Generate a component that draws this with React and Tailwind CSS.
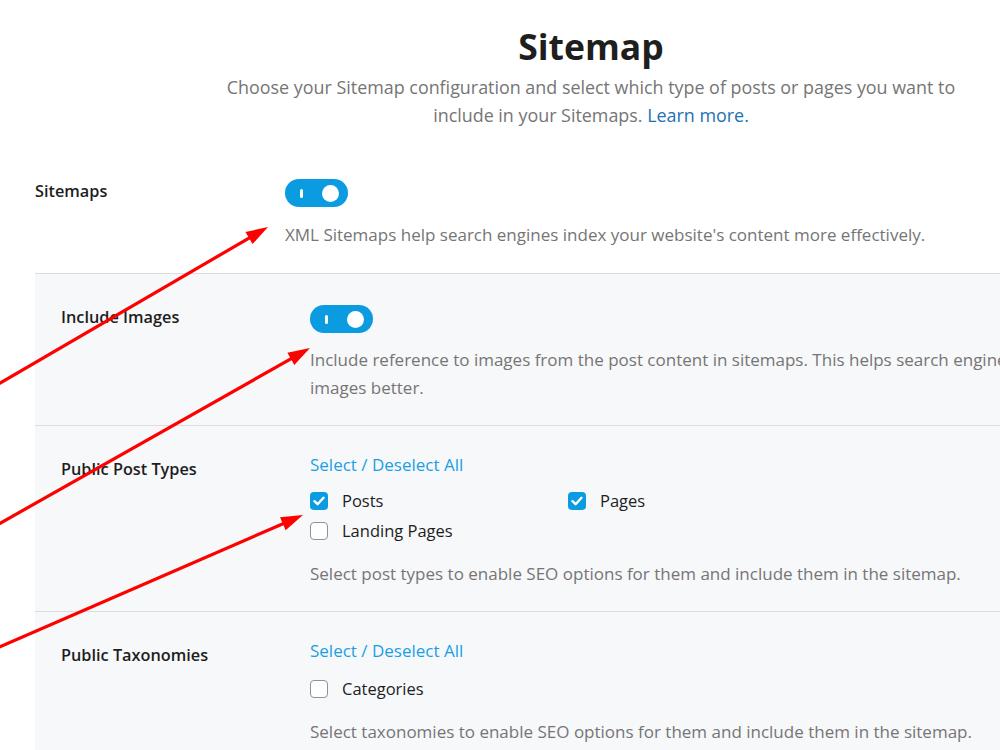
import React from "react";

const FONT = { fontFamily: "'Open Sans', 'Noto Sans', sans-serif" };

function Toggle() {
  return (
    <div className="relative flex h-[28px] w-[63px] items-center rounded-full bg-[#0b9be0]">
      <span className="ml-[15px] h-[9px] w-[3px] rounded-full bg-white" />
      <span className="ml-auto mr-[9px] h-[17px] w-[17px] rounded-full bg-white" />
    </div>
  );
}

function Checkbox({ checked }) {
  if (checked) {
    return (
      <span className="flex h-[18px] w-[18px] items-center justify-center rounded-[4px] bg-[#0b9be0]">
        <svg width="12" height="10" viewBox="0 0 12 10" fill="none">
          <path d="M1.5 5.2 L4.6 8.2 L10.5 1.8" stroke="white" strokeWidth="2.4" strokeLinecap="round" strokeLinejoin="round" />
        </svg>
      </span>
    );
  }
  return <span className="h-[18px] w-[18px] rounded-[4px] border-[1.5px] border-[#8f9296] bg-white" />;
}

function CheckItem({ checked, label }) {
  return (
    <label className="flex h-[30px] items-center gap-[14px] text-[16.5px] text-[#1e1e1e]">
      <Checkbox checked={checked} />
      <span>{label}</span>
    </label>
  );
}

function Arrow({ x1, y1, x2, y2 }) {
  const dx = x2 - x1;
  const dy = y2 - y1;
  const len = Math.hypot(dx, dy);
  const ux = dx / len;
  const uy = dy / len;
  const hl = 22;
  const hw = 7;
  const bx = x2 - ux * hl;
  const by = y2 - uy * hl;
  const nx = -uy;
  const ny = ux;
  const ex = x2 - ux * (hl - 4);
  const ey = y2 - uy * (hl - 4);
  return (
    <g>
      <line x1={x1} y1={y1} x2={ex} y2={ey} stroke="#ff0000" strokeWidth="3.2" />
      <polygon
        points={`${x2},${y2} ${bx + nx * hw},${by + ny * hw} ${bx - nx * hw},${by - ny * hw}`}
        fill="#ff0000"
      />
    </g>
  );
}

export default function App() {
  return (
    <div className="relative h-[750px] w-[1000px] overflow-hidden bg-white" style={FONT}>
      <div className="ml-[35px] w-[1112px]">
        <div className="flex flex-col items-center pt-[24px]">
          <h1 className="text-[35.5px] font-bold leading-[44px] text-[#1e1e1e]">Sitemap</h1>
          <p className="mt-[5px] w-[760px] text-center text-[17.9px] leading-[28px] text-[#757575]">
            Choose your Sitemap configuration and select which type of posts or pages you want to include in your Sitemaps.{" "}
            <span className="text-[#2271b1]">Learn more.</span>
          </p>
        </div>

        <div className="mt-[26px] grid grid-cols-[250px_1fr] border-b border-[#dcdcde] pt-[24px] pb-[24px]">
          <div className="text-[16.3px] font-semibold leading-[24px] text-[#1e1e1e]">Sitemaps</div>
          <div>
            <Toggle />
            <p className="mt-[14px] text-[17px] leading-[28px] text-[#757575]">
              XML Sitemaps help search engines index your website's content more effectively.
            </p>
          </div>
        </div>

        <div className="bg-[#f7f8fa]">
          <div className="grid grid-cols-[249px_1fr] border-b border-[#dcdcde] px-[26px] pt-[31px] pb-[23px]">
            <div className="text-[16.3px] font-semibold leading-[24px] text-[#1e1e1e]">Include Images</div>
            <div className="overflow-hidden">
              <Toggle />
              <p className="mt-[13px] text-[17px] leading-[28px] text-[#757575]">
                <span className="whitespace-nowrap">
                  Include reference to images from the post content in sitemaps. This helps search engines
                </span>
                <br />
                images better.
              </p>
            </div>
          </div>

          <div className="grid grid-cols-[249px_1fr] border-b border-[#dcdcde] px-[26px] pt-[31px] pb-[23px]">
            <div className="text-[16.3px] font-semibold leading-[24px] text-[#1e1e1e]">Public Post Types</div>
            <div>
              <div className="-mt-[4px] text-[17px] leading-[24px] text-[#1a9fe3]">Select / Deselect All</div>
              <div className="mt-[9px] grid grid-cols-[258px_258px]">
                <CheckItem checked label="Posts" />
                <CheckItem checked label="Pages" />
                <CheckItem label="Landing Pages" />
              </div>
              <p className="mt-[14px] text-[17px] leading-[28px] text-[#757575]">
                Select post types to enable SEO options for them and include them in the sitemap.
              </p>
            </div>
          </div>

          <div className="grid grid-cols-[249px_1fr] px-[26px] pt-[31px] pb-[30px]">
            <div className="text-[16.3px] font-semibold leading-[24px] text-[#1e1e1e]">Public Taxonomies</div>
            <div>
              <div className="-mt-[4px] text-[17px] leading-[24px] text-[#1a9fe3]">Select / Deselect All</div>
              <div className="mt-[11px]">
                <CheckItem label="Categories" />
              </div>
              <p className="mt-[14px] text-[17px] leading-[28px] text-[#757575]">
                Select taxonomies to enable SEO options for them and include them in the sitemap.
              </p>
            </div>
          </div>
        </div>
      </div>

      <svg className="pointer-events-none absolute left-0 top-0" width="1000" height="750">
        <Arrow x1={-10} y1={389} x2={268} y2={227} />
        <Arrow x1={-10} y1={529} x2={310} y2={348} />
        <Arrow x1={-10} y1={651} x2={303} y2={515} />
      </svg>
    </div>
  );
}
